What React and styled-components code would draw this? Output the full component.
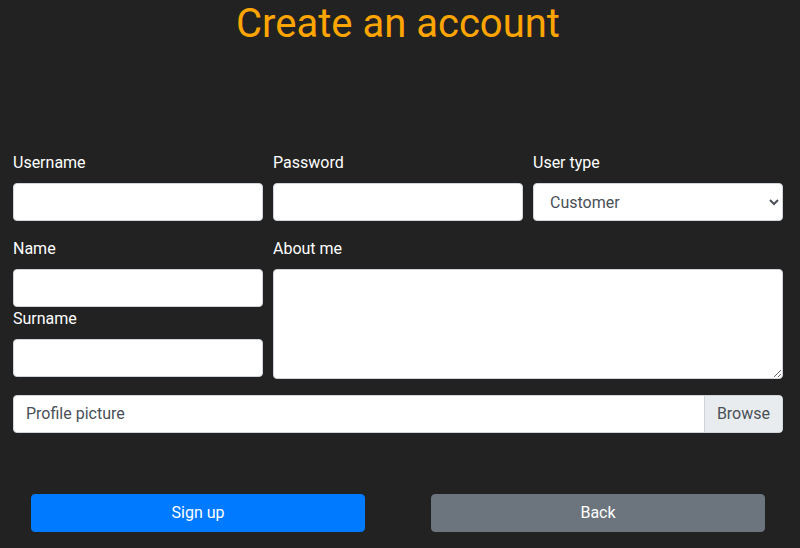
import React from "react";
import styled, { createGlobalStyle } from "styled-components";

const Global = createGlobalStyle`
  html, body { margin: 0; padding: 0; background: #222222; }
  body { font-family: Roboto, "Liberation Sans", sans-serif; font-size: 16px; line-height: 1.5; color: #fff; }
  * { box-sizing: border-box; }
`;

const Page = styled.div`
  width: 800px;
  min-height: 548px;
  background: #222222;
`;

const Title = styled.h1`
  margin: 0 0 103px;
  text-align: center;
  font-family: Roboto, "Liberation Sans", sans-serif;
  font-weight: 400;
  font-size: 40px;
  line-height: 48px;
  color: #ffa500;
  padding-right: 4px;
`;

const Form = styled.form`
  padding-left: 13px;
  width: 783px;
`;

const Grid = styled.div`
  display: grid;
  grid-template-columns: ${(p) => p.$cols || "250px 250px 250px"};
  column-gap: 10px;
  align-items: start;
  margin-bottom: 16px;
`;

const Group = styled.div`
  display: flex;
  flex-direction: column;
`;

const Label = styled.label`
  display: block;
  font-size: 16px;
  line-height: 24px;
  margin-bottom: 8px;
  color: #ffffff;
`;

const Input = styled.input`
  display: block;
  width: 100%;
  height: 38px;
  padding: 6px 12px;
  font-family: inherit;
  font-size: 16px;
  color: #495057;
  background: #fff;
  border: 1px solid #ced4da;
  border-radius: 4px;
  outline: none;
`;

const Select = styled.select`
  display: block;
  width: 100%;
  height: 38px;
  padding: 6px 8px 6px 12px;
  font-family: inherit;
  font-size: 16px;
  color: #495057;
  background: #fff;
  border: 1px solid #ced4da;
  border-radius: 4px;
  outline: none;
`;

const TextArea = styled.textarea`
  display: block;
  width: 100%;
  height: 110px;
  padding: 6px 12px;
  font-family: inherit;
  font-size: 16px;
  color: #495057;
  background: #fff;
  border: 1px solid #ced4da;
  border-radius: 4px;
  outline: none;
`;

const FileBox = styled.div`
  display: flex;
  height: 38px;
  width: 770px;
  background: #fff;
  border: 1px solid #ced4da;
  border-radius: 4px;
  overflow: hidden;
  color: #495057;
  font-size: 16px;
  line-height: 24px;
`;

const FileText = styled.span`
  flex: 1;
  padding: 6px 12px;
`;

const FileButton = styled.span`
  padding: 6px 12px;
  background: #e9ecef;
  border-left: 1px solid #ced4da;
`;

const Buttons = styled.div`
  display: grid;
  grid-template-columns: 400px 400px;
  margin-top: 61px;
`;

const Cell = styled.div`
  padding: 0 35px 0 31px;
`;

const Button = styled.button`
  display: block;
  width: 100%;
  height: 38px;
  border: 1px solid ${(p) => p.$bg};
  background: ${(p) => p.$bg};
  color: #fff;
  font-family: inherit;
  font-size: 16px;
  line-height: 24px;
  border-radius: 4px;
  cursor: pointer;
`;

export default function App() {
  return (
    <Page>
      <Global />
      <Title>Create an account</Title>
      <Form onSubmit={(e) => e.preventDefault()}>
        <Grid>
          <Group>
            <Label>Username</Label>
            <Input type="text" />
          </Group>
          <Group>
            <Label>Password</Label>
            <Input type="password" />
          </Group>
          <Group>
            <Label>User type</Label>
            <Select defaultValue="customer">
              <option value="customer">Customer</option>
              <option value="seller">Seller</option>
            </Select>
          </Group>
        </Grid>
        <Grid $cols="250px 510px">
          <div>
            <Group>
              <Label>Name</Label>
              <Input type="text" />
            </Group>
            <Group>
              <Label>Surname</Label>
              <Input type="text" />
            </Group>
          </div>
          <Group>
            <Label>About me</Label>
            <TextArea />
          </Group>
        </Grid>
        <FileBox>
          <FileText>Profile picture</FileText>
          <FileButton>Browse</FileButton>
        </FileBox>
      </Form>
      <Buttons>
        <Cell>
          <Button $bg="#007bff">Sign up</Button>
        </Cell>
        <Cell>
          <Button $bg="#6c757d">Back</Button>
        </Cell>
      </Buttons>
    </Page>
  );
}
